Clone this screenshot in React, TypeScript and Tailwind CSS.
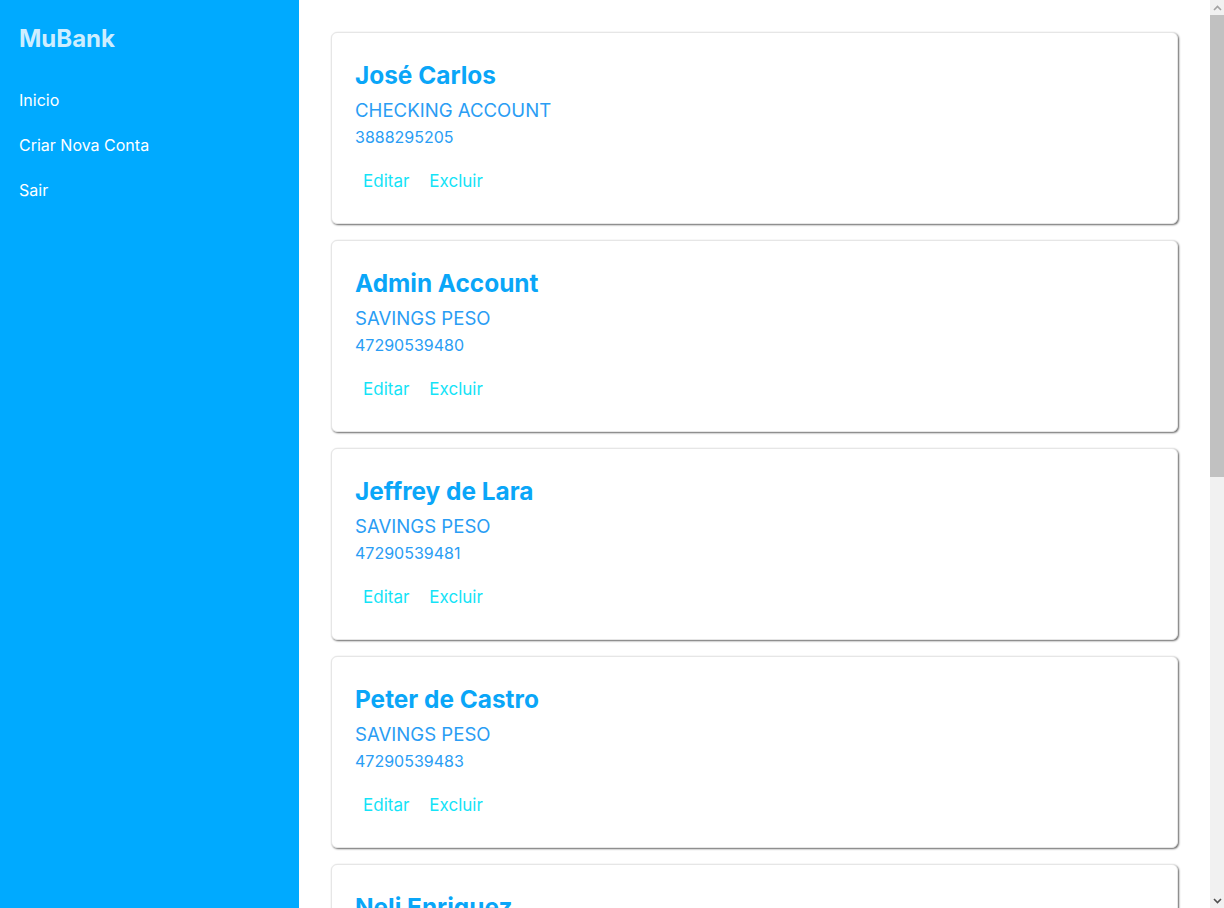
import React from "react";

const accounts = [
  { name: "José Carlos", type: "CHECKING ACCOUNT", number: "3888295205" },
  { name: "Admin Account", type: "SAVINGS PESO", number: "47290539480" },
  { name: "Jeffrey de Lara", type: "SAVINGS PESO", number: "47290539481" },
  { name: "Peter de Castro", type: "SAVINGS PESO", number: "47290539483" },
  { name: "Neli Enriquez", type: "SAVINGS PESO", number: "47290539484" },
  { name: "Maria Souza", type: "CHECKING ACCOUNT", number: "3888295210" },
  { name: "Carlos Mendes", type: "SAVINGS PESO", number: "47290539486" },
  { name: "Ana Paula", type: "CHECKING ACCOUNT", number: "3888295214" },
];

function Scrollbar() {
  return (
    <div className="flex h-screen w-[14px] shrink-0 flex-col bg-[#f1f1f1]">
      <div className="flex h-[15px] items-center justify-center">
        <svg width="9" height="6" viewBox="0 0 9 6">
          <path d="M1 5 L4.5 1.5 L8 5" fill="none" stroke="#a3a3a3" strokeWidth="1.6" />
        </svg>
      </div>
      <div className="h-[462px] bg-[#c1c1c1]" />
      <div className="flex-1" />
      <div className="flex h-[15px] items-center justify-center">
        <svg width="9" height="6" viewBox="0 0 9 6">
          <path d="M1 1 L4.5 4.5 L8 1" fill="none" stroke="#505050" strokeWidth="1.6" />
        </svg>
      </div>
    </div>
  );
}

export default function App() {
  return (
    <div
      className="flex h-screen overflow-hidden bg-white"
      style={{ fontFamily: "Inter, 'Noto Sans', sans-serif" }}
    >
      <aside className="h-screen w-[299px] shrink-0 bg-[#00aaff] px-[19px] pt-[23px]">
        <div className="text-[24px] font-bold leading-8 text-[#cdeeff]">MuBank</div>
        <nav className="mt-[33px] flex flex-col gap-[21px] text-[16px] leading-6 text-white">
          <a>Inicio</a>
          <a>Criar Nova Conta</a>
          <a>Sair</a>
        </nav>
      </aside>
      <main className="flex h-screen flex-1 flex-col gap-4 overflow-hidden px-8 pb-8 pt-8">
        {accounts.map((a) => (
          <div
            key={a.number}
            className="shrink-0 rounded-md border border-[#e6e6e6] bg-white px-[23px] pb-[22px] pt-[26px] shadow-[1px_1px_2px_rgba(0,0,0,0.6)]"
          >
            <div className="text-[24.4px] font-bold leading-8 text-[#0aa6f8]">{a.name}</div>
            <div className="mt-[5px] text-[18.6px] leading-7 text-[#2a9df4]">{a.type}</div>
            <div className="mt-[1px] text-[16px] leading-6 text-[#2a9df4]">{a.number}</div>
            <div className="mt-3 flex gap-1">
              <button className="px-2 py-1.5 text-[17px] leading-7 text-[#14e3f7]">Editar</button>
              <button className="px-2 py-1.5 text-[17px] leading-7 text-[#14e3f7]">Excluir</button>
            </div>
          </div>
        ))}
      </main>
      <Scrollbar />
    </div>
  );
}
